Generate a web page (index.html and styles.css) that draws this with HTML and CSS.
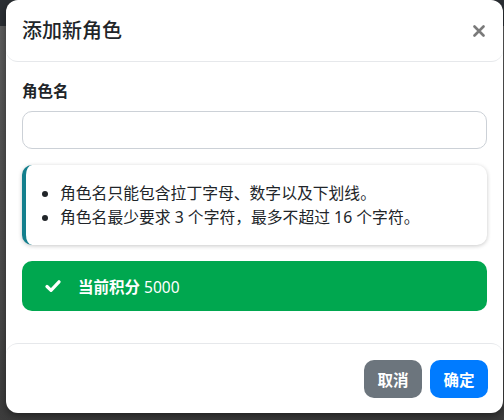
FILE: index.html
```html
<!DOCTYPE html>
<html lang="zh-CN">
<head>
<meta charset="utf-8">
<title>添加新角色</title>
<link rel="stylesheet" href="styles.css">
</head>
<body>
<div class="backdrop">
  <div class="modal">
    <div class="modal-header">
      <h5 class="modal-title">添加新角色</h5>
      <button class="close" type="button" aria-label="关闭">
        <svg width="12" height="12" viewBox="0 0 12 12"><path d="M1.5 1.5 L10.5 10.5 M10.5 1.5 L1.5 10.5" stroke="#7a7a7a" stroke-width="2.6" stroke-linecap="round"/></svg>
      </button>
    </div>
    <div class="modal-body">
      <label class="form-label">角色名</label>
      <input class="form-control" type="text">
      <div class="callout">
        <ul>
          <li>角色名只能包含拉丁字母、数字以及下划线。</li>
          <li>角色名最少要求 3 个字符，最多不超过 16 个字符。</li>
        </ul>
      </div>
      <div class="alert-success">
        <svg class="check" width="16" height="14" viewBox="0 0 16 14"><path d="M2 7.5 L6 11.3 L14 2.8" fill="none" stroke="#fff" stroke-width="3.2" stroke-linecap="round" stroke-linejoin="round"/></svg>
        <span><b>当前积分</b> 5000</span>
      </div>
    </div>
    <div class="modal-footer">
      <button class="btn btn-secondary" type="button">取消</button>
      <button class="btn btn-primary" type="button">确定</button>
    </div>
  </div>
</div>
</body>
</html>
```

FILE: styles.css
```css
html, body {
  margin: 0;
  padding: 0;
  height: 100%;
}
body {
  background: linear-gradient(180deg, #2b2f34 0, #2b2f34 26px, #5e5e5e 26px, #555 120px, #4a4a4a 300px, #3c3c3c 100%);
  font-family: "Noto Sans", "Noto Sans CJK SC", sans-serif;
  color: #212529;
  font-size: 15.5px;
  overflow: hidden;
}
.backdrop {
  padding-left: 6px;
  height: 100%;
}
.modal {
  width: 497px;
  background: #fff;
  border-radius: 12px;
  box-shadow: 0 3px 8px rgba(0, 0, 0, 0.45);
  display: flex;
  flex-direction: column;
}
.modal-header {
  height: 62px;
  box-sizing: border-box;
  padding: 0 18px 0 16px;
  display: flex;
  align-items: center;
  justify-content: space-between;
  border-bottom: 1px solid #e6e8eb;
  border-radius: 12px;
}
.modal-title {
  margin: 0;
  font-size: 20px;
  font-weight: 500;
  line-height: 24px;
  color: #212529;
}
.close {
  border: 0;
  background: transparent;
  padding: 0;
  width: 12px;
  height: 12px;
  display: flex;
  margin-top: 1px;
}
.modal-body {
  padding: 17px 16px 32px;
  display: flex;
  flex-direction: column;
}
.form-label {
  font-weight: 700;
  line-height: 24px;
  margin-bottom: 8px;
}
.form-control {
  height: 38px;
  box-sizing: border-box;
  border: 1px solid #ccd1d7;
  border-radius: 10px;
  font: inherit;
  padding: 0 12px;
  margin: 0;
}
.callout {
  margin-top: 16px;
  border-left: 4px solid #147f8d;
  border-radius: 10px;
  background: #fff;
  box-shadow: 0 1px 4px rgba(0, 0, 0, 0.22);
}
.callout ul {
  margin: 0;
  padding: 16px 16px 16px 34px;
  line-height: 24px;
  font-size: 15.8px;
}
.alert-success {
  margin-top: 16px;
  height: 50px;
  box-sizing: border-box;
  background: #00a74f;
  border-radius: 10px;
  color: #fff;
  display: flex;
  align-items: center;
  padding-left: 23px;
  gap: 17px;
}
.alert-success b {
  font-weight: 700;
}
.modal-footer {
  border-top: 1px solid #e6e8eb;
  border-radius: 12px;
  padding: 16px 15px 15px;
  display: flex;
  justify-content: flex-end;
  gap: 8px;
}
.btn {
  height: 38px;
  border: 0;
  border-radius: 10px;
  padding: 0 13.5px;
  color: #fff;
  font: inherit;
  font-weight: 700;
}
.btn-secondary {
  background: #6c757d;
}
.btn-primary {
  background: #007bff;
}
```
